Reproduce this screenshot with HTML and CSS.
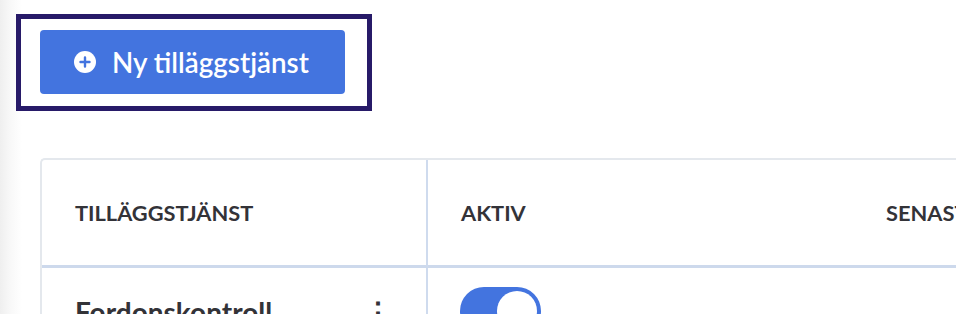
FILE: index.html
```html
<!DOCTYPE html>
<html lang="sv">
<head>
<meta charset="utf-8">
<link rel="stylesheet" href="styles.css">
</head>
<body>
<div class="page">
  <div class="focus-ring">
    <button class="btn-primary" type="button">
      <svg class="btn-icon" viewBox="0 0 22 22" width="22" height="22" aria-hidden="true">
        <circle cx="11" cy="11" r="11" fill="#fff"/>
        <path d="M11 6.5v9M6.5 11h9" stroke="#4374df" stroke-width="2.4" stroke-linecap="round"/>
      </svg>
      <span>Ny tilläggstjänst</span>
    </button>
  </div>

  <div class="card">
    <div class="grid">
      <div class="th col-first">TILLÄGGSTJÄNST</div>
      <div class="th">AKTIV</div>
      <div class="th">SENASTE ÄNDRING</div>

      <div class="td col-first row-name">
        <span class="name">Fordonskontroll</span>
        <span class="kebab">⋮</span>
      </div>
      <div class="td">
        <span class="toggle"><span class="knob"></span></span>
      </div>
      <div class="td"></div>
    </div>
  </div>
</div>
</body>
</html>
```

FILE: styles.css
```css
html, body {
  margin: 0;
  padding: 0;
  height: 100%;
  overflow: hidden;
}

body {
  font-family: Lato, "Open Sans", sans-serif;
  background: linear-gradient(to right, #efefef 0, #f8f8f8 10px, #ffffff 22px);
  color: #333338;
}

.page {
  padding: 14px 0 0 16px;
}

.focus-ring {
  display: inline-block;
  border: 5px solid #271a68;
  padding: 11px 22px 12px 19px;
}

.btn-primary {
  display: flex;
  align-items: center;
  gap: 16px;
  width: 305px;
  height: 64px;
  padding: 0 0 0 34px;
  border: none;
  border-radius: 4px;
  background: #4374df;
  color: #fff;
  font-family: Lato, sans-serif;
  font-size: 27.8px;
  font-weight: 600;
  cursor: pointer;
}

.btn-icon {
  flex: none;
}

.card {
  margin: 47px 0 0 24px;
  border: 2px solid #e4e8ed;
  border-right: none;
  border-radius: 5px 0 0 0;
  background: #fff;
}

.grid {
  display: grid;
  grid-template-columns: 386px 425px 1fr;
}

.th {
  height: 105px;
  display: flex;
  align-items: center;
  padding-left: 33px;
  border-bottom: 3px solid #cdd9ec;
  font-size: 21.8px;
  font-weight: 700;
  white-space: nowrap;
  color: #333338;
}

.col-first {
  border-right: 2px solid #cfdbee;
}

.td {
  padding: 19px 0 0 31px;
  height: 60px;
}

.row-name {
  display: flex;
  justify-content: space-between;
  align-items: flex-start;
  padding: 27px 34px 0 33px;
}

.name {
  font-size: 28px;
  font-weight: 700;
  color: #333338;
}

.kebab {
  font-size: 28px;
  font-weight: 700;
  line-height: 1.2;
}

.toggle {
  display: block;
  width: 81px;
  height: 48px;
  margin-left: 1px;
  border-radius: 24px;
  background: #4374df;
  position: relative;
}

.knob {
  position: absolute;
  top: 4px;
  right: 4px;
  width: 40px;
  height: 40px;
  border-radius: 50%;
  background: #fff;
}
```
